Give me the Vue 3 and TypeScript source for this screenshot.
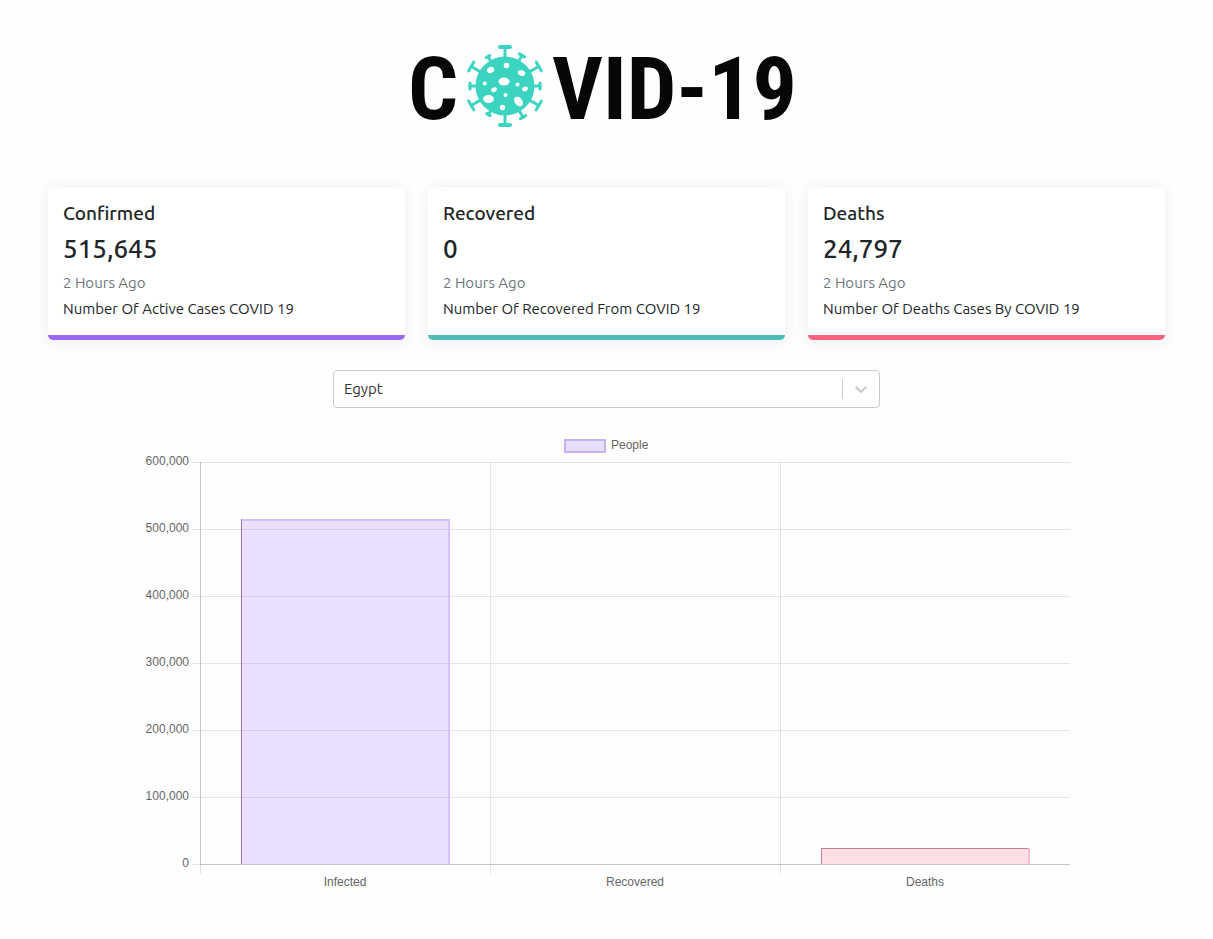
<script setup lang="ts">
import { computed, ref } from 'vue'

interface Stat {
  title: string
  value: number
  note: string
  tone: string
}

const country = ref('Egypt')

const stats: Stat[] = [
  { title: 'Confirmed', value: 515645, note: 'Number Of Active Cases COVID 19', tone: 'infected' },
  { title: 'Recovered', value: 0, note: 'Number Of Recovered From COVID 19', tone: 'recovered' },
  { title: 'Deaths', value: 24797, note: 'Number Of Deaths Cases By COVID 19', tone: 'deaths' },
]

const format = (n: number): string => n.toLocaleString('en-US')

// Chart geometry, in viewBox units
const plot = { left: 57, right: 927, top: 30, bottom: 432 }
const maxValue = 600000
const band = (plot.right - plot.left) / 3

const ticks = [600000, 500000, 400000, 300000, 200000, 100000, 0].map((value) => ({
  label: format(value),
  y: plot.bottom - (value / maxValue) * (plot.bottom - plot.top),
}))

const labels = ['Infected', 'Recovered', 'Deaths']

const bars = computed(() =>
  stats.map((s, i) => {
    const height = Math.floor((s.value / maxValue) * (plot.bottom - plot.top))
    const center = plot.left + band * (i + 0.5)
    return { label: labels[i], tone: s.tone, center, x: Math.round(center - 104), y: plot.bottom - height, height }
  }),
)

// Spikes of the virus: angle, cap distance, cap half-width, cap thickness
const spikes = [
  { a: 0, r: 39, w: 6, s: 4 },
  { a: 29, r: 35, w: 4, s: 3 },
  { a: 60, r: 39, w: 6, s: 3 },
  { a: 90, r: 35, w: 4, s: 3 },
  { a: 120, r: 39, w: 6, s: 3 },
  { a: 150, r: 36, w: 4, s: 3 },
  { a: 180, r: 39, w: 6, s: 4 },
  { a: 210, r: 33, w: 3, s: 3 },
  { a: 240, r: 39, w: 6, s: 3 },
  { a: 270, r: 35, w: 4, s: 3 },
  { a: 300, r: 39, w: 6, s: 3 },
  { a: 330, r: 34, w: 3, s: 3 },
]
</script>

<template>
  <main class="page">
    <h1 class="logo">
      <span>C</span>
      <svg class="virus" viewBox="0 0 78 84" aria-hidden="true">
        <g transform="translate(39 42)" fill="none" stroke="#3bd4c1" stroke-linecap="round">
          <g v-for="p in spikes" :key="p.a" :transform="`rotate(${p.a})`">
            <path stroke-width="3" :d="`M0 -27V${-p.r}`" />
            <path :stroke-width="p.s" :d="`M${-p.w + 1} ${-p.r}H${p.w - 1}`" />
          </g>
        </g>
        <circle cx="39" cy="42" r="29.5" fill="#3bd4c1" />
        <g fill="#fff">
          <ellipse cx="24.500" cy="26" rx="3.700" ry="3" transform="rotate(-18 24.500 26)" />
          <ellipse cx="40.500" cy="21.500" rx="2.800" ry="2.800" />
          <ellipse cx="55.500" cy="29" rx="3.800" ry="2.800" transform="rotate(22 55.500 29)" />
          <ellipse cx="38" cy="37.500" rx="5.500" ry="4" />
          <circle cx="18.700" cy="39.500" r="2" />
          <circle cx="51.500" cy="40.500" r="2" />
          <ellipse cx="28" cy="45.700" rx="3" ry="2.200" transform="rotate(-28 28 45.700)" />
          <ellipse cx="59" cy="45" rx="3" ry="2.200" transform="rotate(-20 59 45)" />
          <circle cx="39.500" cy="51" r="2" />
          <ellipse cx="22.500" cy="55" rx="5.400" ry="4" />
          <ellipse cx="52.500" cy="57.500" rx="3.800" ry="5.400" transform="rotate(-38 52.500 57.500)" />
          <circle cx="36.500" cy="63.500" r="2.700" />
        </g>
      </svg>
      <span>VID-19</span>
    </h1>

    <section class="cards">
      <article v-for="s in stats" :key="s.title" class="card" :class="s.tone">
        <h2>{{ s.title }}</h2>
        <p class="value">{{ format(s.value) }}</p>
        <p class="ago">2 Hours Ago</p>
        <p class="note">{{ s.note }}</p>
      </article>
    </section>

    <div class="picker">
      <select v-model="country" aria-label="Country">
        <option>Egypt</option>
      </select>
      <svg class="chevron" viewBox="0 0 20 20" aria-hidden="true">
        <path
          d="M4.516 7.548c.436-.446 1.043-.481 1.576 0L10 11.295l3.908-3.747c.533-.481 1.141-.446 1.574 0 .436.445.408 1.197 0 1.615-.406.418-4.695 4.502-4.695 4.502a1.095 1.095 0 0 1-1.576 0S4.924 9.581 4.516 9.163s-.436-1.170 0-1.615z"
        />
      </svg>
    </div>

    <svg class="chart" viewBox="0 0 927 464" role="img" aria-label="People">
      <rect class="swatch" x="422" y="8" width="40" height="12" />
      <text x="468" y="17">People</text>

      <g v-for="t in ticks" :key="t.label">
        <rect class="grid" x="49" :y="t.y" width="878" height="1" />
        <text class="end" x="46" :y="t.y + 3">{{ t.label }}</text>
      </g>
      <rect v-for="i in 3" :key="i" class="grid" :x="plot.left + band * (i - 1)" y="30" width="1" height="412" />
      <rect class="axis" x="57" y="30" width="1" height="403" />
      <rect class="axis" x="57" y="432" width="870" height="1" />

      <g v-for="b in bars" :key="b.label" :class="b.tone">
        <template v-if="b.height">
          <rect class="fill" :x="b.x" :y="b.y" width="208" :height="b.height" />
          <rect class="cap" :x="b.x" :y="b.y" width="208" />
          <rect class="edge" :x="b.x" :y="b.y" width="1" :height="b.height" />
          <rect class="soft" :x="b.x + 207" :y="b.y" width="2" :height="b.height" />
        </template>
        <text class="middle" :x="b.center" y="454">{{ b.label }}</text>
      </g>
    </svg>
  </main>
</template>

<style>
body {
  margin: 0;
  background: #fefefe;
}
</style>

<style scoped>
.page {
  box-sizing: border-box;
  padding: 40px 24px;
  color: #212529;
  font-family: Ubuntu, "Noto Sans", sans-serif;
}

.logo {
  display: flex;
  justify-content: center;
  align-items: center;
  gap: 8px;
  height: 92px;
  margin: 0 0 55px;
  padding-right: 8px;
  color: #050807;
  font: 700 88px/88px "Roboto Condensed", "Liberation Sans", sans-serif;
}

.logo span {
  padding-top: 6px;
}

.virus {
  width: 78px;
  height: 84px;
}

.cards {
  display: grid;
  grid-template-columns: repeat(3, 1fr);
  gap: 23px;
  max-width: 1117px;
  margin: 0 auto 30px;
}

.card {
  padding: 14px 15px 15px;
  border-bottom: 5px solid;
  border-radius: 5px;
  background: #fff;
  box-shadow: 0 2px 14px rgba(60, 60, 120, 0.09);
}

.card.infected {
  border-color: #9966f6;
}

.card.recovered {
  border-color: #4bbcb9;
}

.card.deaths {
  border-color: #f9647f;
}

.card h2,
.card p {
  margin: 0;
}

.card h2 {
  font-size: 19px;
  line-height: 24px;
  font-weight: 500;
}

.card .value {
  margin: 8px 0 7px;
  font-size: 26px;
  line-height: 32px;
  font-weight: 500;
}

.card .ago,
.card .note {
  font-size: 15px;
  line-height: 22px;
}

.card .ago {
  margin-bottom: 4px;
  color: #6c757d;
}

.picker {
  position: relative;
  width: 547px;
  max-width: 100%;
  margin: 0 auto 24px;
}

.picker select {
  display: block;
  width: 100%;
  height: 38px;
  padding: 0 48px 0 10px;
  border: 1px solid #ccc;
  border-radius: 4px;
  appearance: none;
  background: #fff;
  color: #333;
  font: 15px/20px Ubuntu, "Noto Sans", sans-serif;
}

.picker::after {
  content: "";
  position: absolute;
  top: 9px;
  right: 37px;
  width: 1px;
  height: 20px;
  background: #ccc;
}

.chevron {
  position: absolute;
  top: 9px;
  right: 9px;
  width: 20px;
  height: 20px;
  fill: #ccc;
  pointer-events: none;
}

.chart {
  display: block;
  width: 100%;
  max-width: 927px;
  margin: 0 auto;
}

.chart text {
  fill: #666;
  font: 12px "Liberation Sans", Arial, sans-serif;
}

.chart .end {
  text-anchor: end;
}

.chart .middle {
  text-anchor: middle;
}

.grid {
  fill: rgba(0, 0, 0, 0.1);
}

.axis {
  fill: rgba(0, 0, 0, 0.13);
}

.swatch {
  fill: #e8dffb;
  stroke: #c8b0f4;
  stroke-width: 2px;
}

.infected .fill {
  fill: rgba(153, 102, 255, 0.2);
}

.infected .edge {
  fill: #9a78bd;
}

.infected .cap,
.infected .soft {
  fill: #d5c1f8;
}

.infected .cap {
  height: 2px;
}

.deaths .fill {
  fill: rgba(255, 99, 132, 0.2);
}

.deaths .edge,
.deaths .cap {
  fill: #cf7c98;
}

.deaths .cap {
  height: 1px;
}

.deaths .soft {
  fill: #fbbccb;
}
</style>
